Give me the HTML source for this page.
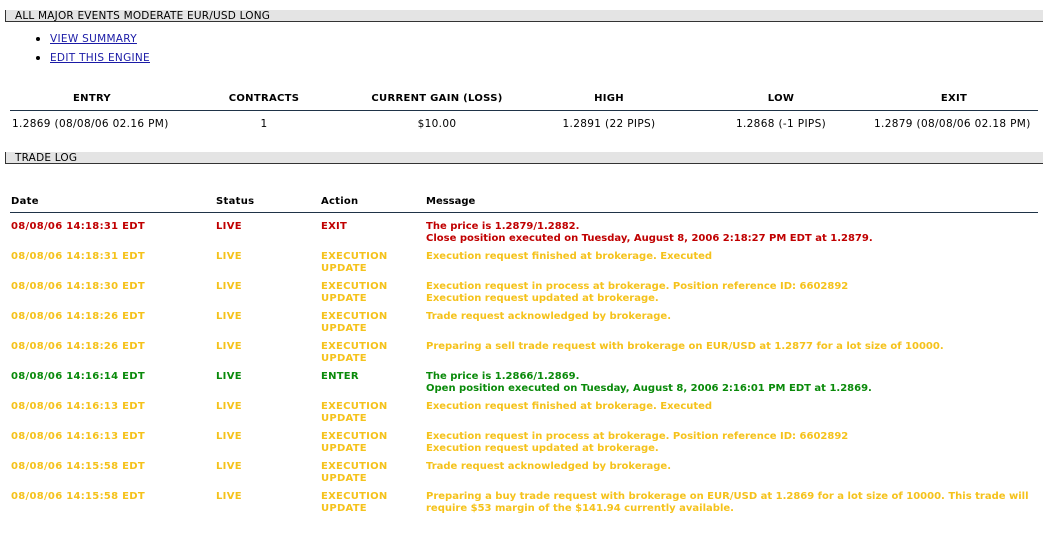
<!DOCTYPE html>
<html><head><meta charset="utf-8"><style>
body{margin:0;background:#fff;font-family:"DejaVu Sans","Liberation Sans",sans-serif;font-size:10px;color:#000;width:1050px;height:547px;position:relative;overflow:hidden}
.bar{position:absolute;left:5px;width:1028px;height:11px;background:#e4e4e4;border-left:1px solid #333;border-bottom:1px solid #333;line-height:12px;padding-left:9px;box-sizing:content-box;font-size:10.5px;letter-spacing:0.2px;white-space:nowrap}
.a{position:absolute;white-space:nowrap;line-height:12px}
a{color:#1a1aa6;text-decoration:underline;font-size:10.5px;letter-spacing:0.3px}
.dot{position:absolute;width:4px;height:4px;border-radius:50%;background:#000}
.th{position:absolute;top:93px;width:172px;text-align:center;font-weight:bold;line-height:12px;font-size:10px;letter-spacing:0.3px}
.td{position:absolute;top:117px;width:172px;text-align:center;line-height:12px;font-size:10.5px;letter-spacing:0.35px}
.n{font-size:10.5px;letter-spacing:0.35px}
.hr{position:absolute;left:10px;width:1028px;height:1px;background:#1f3347}
.r{color:#c00000}.y{color:#f5c21b}.g{color:#0a8a0a}
.row{position:absolute;left:0;width:1050px;font-weight:bold;line-height:12px}
.row div{position:absolute;top:0;white-space:nowrap}
.c1{left:11px;letter-spacing:0.3px}.c2{left:216px;letter-spacing:0.3px}.c3{left:321px;letter-spacing:0.25px}.c4{left:426px}
</style></head><body>
<div class="bar" style="top:10px">ALL MAJOR EVENTS MODERATE EUR/USD LONG</div>
<div class="dot" style="left:36px;top:37px"></div><div class="a" style="left:50px;top:33px"><a>VIEW SUMMARY</a></div>
<div class="dot" style="left:36px;top:56px"></div><div class="a" style="left:50px;top:52px"><a>EDIT THIS ENGINE</a></div>
<div class="th" style="left:6px">ENTRY</div>
<div class="th" style="left:178px">CONTRACTS</div>
<div class="th" style="left:351px">CURRENT GAIN (LOSS)</div>
<div class="th" style="left:523px">HIGH</div>
<div class="th" style="left:695px">LOW</div>
<div class="th" style="left:868px">EXIT</div>
<div class="hr" style="top:110px"></div>
<div class="a n" style="left:12px;top:118px">1.2869 (08/08/06 02.16 PM)</div>
<div class="td" style="left:178px;top:118px">1</div>
<div class="td" style="left:351px;top:118px">$10.00</div>
<div class="td" style="left:523px;top:118px">1.2891 (22 PIPS)</div>
<div class="td" style="left:695px;top:118px">1.2868 (-1 PIPS)</div>
<div class="a n" style="left:874px;top:118px">1.2879 (08/08/06 02.18 PM)</div>
<div class="bar" style="top:152px">TRADE LOG</div>
<div class="row" style="top:196px"><div class="c1">Date</div><div class="c2">Status</div><div class="c3">Action</div><div class="c4">Message</div></div>
<div class="hr" style="top:212px"></div>
<div class="row r" style="top:221px"><div class="c1">08/08/06 14:18:31 EDT</div><div class="c2">LIVE</div><div class="c3">EXIT</div><div class="c4">The price is 1.2879/1.2882.<br>Close position executed on Tuesday, August 8, 2006 2:18:27 PM EDT at 1.2879.</div></div>
<div class="row y" style="top:251px"><div class="c1">08/08/06 14:18:31 EDT</div><div class="c2">LIVE</div><div class="c3">EXECUTION<br>UPDATE</div><div class="c4">Execution request finished at brokerage. Executed</div></div>
<div class="row y" style="top:281px"><div class="c1">08/08/06 14:18:30 EDT</div><div class="c2">LIVE</div><div class="c3">EXECUTION<br>UPDATE</div><div class="c4">Execution request in process at brokerage. Position reference ID: 6602892<br>Execution request updated at brokerage.</div></div>
<div class="row y" style="top:311px"><div class="c1">08/08/06 14:18:26 EDT</div><div class="c2">LIVE</div><div class="c3">EXECUTION<br>UPDATE</div><div class="c4">Trade request acknowledged by brokerage.</div></div>
<div class="row y" style="top:341px"><div class="c1">08/08/06 14:18:26 EDT</div><div class="c2">LIVE</div><div class="c3">EXECUTION<br>UPDATE</div><div class="c4">Preparing a sell trade request with brokerage on EUR/USD at 1.2877 for a lot size of 10000.</div></div>
<div class="row g" style="top:371px"><div class="c1">08/08/06 14:16:14 EDT</div><div class="c2">LIVE</div><div class="c3">ENTER</div><div class="c4">The price is 1.2866/1.2869.<br>Open position executed on Tuesday, August 8, 2006 2:16:01 PM EDT at 1.2869.</div></div>
<div class="row y" style="top:401px"><div class="c1">08/08/06 14:16:13 EDT</div><div class="c2">LIVE</div><div class="c3">EXECUTION<br>UPDATE</div><div class="c4">Execution request finished at brokerage. Executed</div></div>
<div class="row y" style="top:431px"><div class="c1">08/08/06 14:16:13 EDT</div><div class="c2">LIVE</div><div class="c3">EXECUTION<br>UPDATE</div><div class="c4">Execution request in process at brokerage. Position reference ID: 6602892<br>Execution request updated at brokerage.</div></div>
<div class="row y" style="top:461px"><div class="c1">08/08/06 14:15:58 EDT</div><div class="c2">LIVE</div><div class="c3">EXECUTION<br>UPDATE</div><div class="c4">Trade request acknowledged by brokerage.</div></div>
<div class="row y" style="top:491px"><div class="c1">08/08/06 14:15:58 EDT</div><div class="c2">LIVE</div><div class="c3">EXECUTION<br>UPDATE</div><div class="c4">Preparing a buy trade request with brokerage on EUR/USD at 1.2869 for a lot size of 10000. This trade will<br>require $53 margin of the $141.94 currently available.</div></div>
</body></html>
